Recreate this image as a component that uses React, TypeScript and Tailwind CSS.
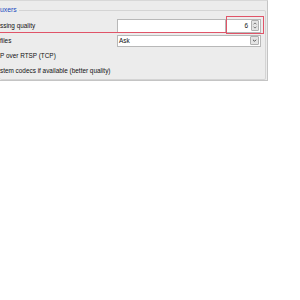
export default function App() {
  return (
    <div className="relative w-[300px] h-[300px] overflow-hidden bg-white font-['Liberation_Sans',Arial,sans-serif] text-[6.4px] text-[#111]">
      <div className="w-[268px] h-[81px] bg-[#ececec] border-t border-t-[#d8d8d8] border-r border-b border-[#c4c4c4] pt-[5px]">
        <fieldset className="h-[74px] mr-[1px] border border-l-0 border-[#d4d4d4] rounded-[2px]">
          <legend className="text-[#1848c0] text-[6.8px] leading-[8px] pr-[2px]">uxers</legend>
          <div className="flex flex-col pt-[4px]">
            <div className="flex items-center h-[15px]">
              <span className="w-[117px]">ssing quality</span>
              <div className="w-[109px] h-[14px] bg-white border border-[#b8b8b8]" />
              <div className="flex items-center justify-end w-[35px] h-[14px] bg-white border border-l-0 border-[#b8b8b8] pr-[1px]">
                <span className="mr-[3px]">6</span>
                <div className="flex flex-col w-[8px] h-[11px] border border-[#b0b0b0] bg-[#e4e4e4] rounded-[1px]">
                  <svg viewBox="0 0 8 11" className="w-full h-full">
                    <path d="M2 4 L4 2 L6 4" fill="none" stroke="#555" strokeWidth="1" />
                    <path d="M2 7 L4 9 L6 7" fill="none" stroke="#555" strokeWidth="1" />
                  </svg>
                </div>
              </div>
            </div>
            <div className="flex items-center h-[15px]">
              <span className="w-[117px]">files</span>
              <div className="flex items-center justify-between w-[144px] h-[12px] bg-white border border-[#b8b8b8] pl-[1px] pr-[1px]">
                <span>Ask</span>
                <div className="w-[9px] h-[9px] border border-[#b0b0b0] bg-[#e4e4e4] rounded-[1px]">
                  <svg viewBox="0 0 9 9" className="w-full h-full">
                    <path d="M2.5 3.5 L4.5 5.5 L6.5 3.5" fill="none" stroke="#444" strokeWidth="1.2" />
                  </svg>
                </div>
              </div>
            </div>
            <div className="flex items-center h-[15px]">
              <span>P over RTSP (TCP)</span>
            </div>
            <div className="flex items-center h-[15px]">
              <span>stem codecs if available (better quality)</span>
            </div>
          </div>
        </fieldset>
      </div>
      <div className="absolute left-0 top-[32px] w-[226px] h-px bg-[#e05468]" />
      <div className="absolute left-[226px] top-[16px] w-[38px] h-[18px] border border-[#e05468]" />
    </div>
  );
}
